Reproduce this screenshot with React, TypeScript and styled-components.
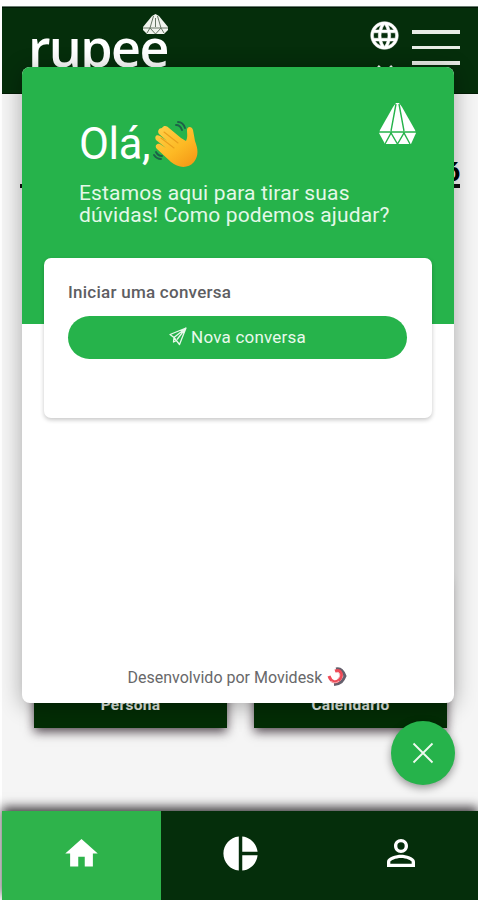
import { createGlobalStyle, styled } from 'styled-components';
import { MdHome, MdLanguage, MdPersonOutline, MdPieChart } from 'react-icons/md';

const GlobalStyle = createGlobalStyle`
    * {
        box-sizing: border-box;
    }

    body {
        margin: 0;
        background: #fefefe;
        font-family: Roboto, "Liberation Sans", sans-serif;
    }
`;

const Page = styled.div`
    position: relative;
    display: flex;
    flex-direction: column;
    height: 900px;
    padding: 6px 0 0 2px;
    overflow: hidden;
`;

const Header = styled.header`
    display: flex;
    align-items: flex-start;
    flex-shrink: 0;
    height: 88px;
    padding: 0 18px 0 26px;
    background: #052e0b;
    border-top: 1px solid #687d70;
    border-bottom: 1px solid #021c04;
    box-shadow: inset 0 1px 0 #001603;
`;

const Brand = styled.div`
    position: relative;
    margin-right: auto;
    padding-top: 11px;
    color: #fff;
    font: 600 52px/58px 'Open Sans', sans-serif;
    letter-spacing: -1.6px;
`;

const BrandGem = styled.svg`
    position: absolute;
    top: 7px;
    left: 114px;
`;

const Language = styled.div`
    display: flex;
    flex-direction: column;
    align-items: center;
    gap: 13px;
    padding-top: 12px;
    margin-right: 11px;
    color: #fff;
`;

const GlobeIcon = styled(MdLanguage)`
    path:not([fill='none']) {
        stroke: #fff;
        stroke-width: 0.4px;
    }
`;

const Burger = styled.div`
    display: flex;
    flex-direction: column;
    gap: 12px;
    padding-top: 23px;
`;

const BurgerLine = styled.span`
    width: 48px;
    height: 3.5px;
    background: #e9ece7;
`;

const Main = styled.main`
    display: flex;
    flex-direction: column;
    flex: 1;
    padding: 58px 18px 0;
    background: #f5f5f5;
`;

const Headline = styled.h1`
    height: 36px;
    margin: 0;
    border-bottom: 4px solid #111;
    font-size: 25px;
    line-height: 41px;
    font-weight: 900;
    text-align: right;
`;

const Tiles = styled.div`
    display: grid;
    grid-template-columns: 193px 193px;
    gap: 27px;
    margin: auto 0 83px 14px;
`;

const Tile = styled.div`
    display: flex;
    justify-content: center;
    align-items: flex-end;
    height: 150px;
    padding-bottom: 14px;
    background: #032d05;
    box-shadow: 0 4px 10px rgba(30, 15, 25, 0.75);
    color: #e5ece5;
    font-size: 15.5px;
    line-height: 18px;
    font-weight: 700;
    letter-spacing: 0.3px;
`;

const BottomNav = styled.nav`
    display: grid;
    grid-template-columns: 158.5px 160px 161px;
    flex-shrink: 0;
    height: 89px;
    background: #052e0b;
    box-shadow: 0 -4px 10px rgba(20, 15, 20, 0.8);
`;

const NavItem = styled.div<{ $active?: boolean }>`
    display: flex;
    justify-content: center;
    align-items: center;
    padding-bottom: 5px;
    background: ${p => (p.$active ? '#2eb34b' : 'transparent')};
    color: #fff;
`;

const Widget = styled.section`
    position: absolute;
    top: 67px;
    left: 22px;
    display: flex;
    flex-direction: column;
    width: 432px;
    height: 636px;
    border-radius: 8px;
    background: #fff;
    box-shadow: 0 3px 22px rgba(0, 0, 0, 0.32);
    overflow: hidden;
`;

const WidgetHeader = styled.div`
    display: flex;
    justify-content: space-between;
    flex-shrink: 0;
    height: 257px;
    padding: 36px 38px 0 57px;
    background: #26b34b;
    color: #fff;

    > svg {
        flex-shrink: 0;
    }
`;

const Greeting = styled.div`
    width: 290px;
    white-space: nowrap;
`;

const Hello = styled.div`
    display: flex;
    align-items: center;
    gap: 3px;
    height: 68px;
    padding-top: 16px;
    font-size: 43.5px;
    line-height: 52px;
    letter-spacing: -0.4px;
`;

const Intro = styled.p`
    margin: 12px 0 0;
    color: #e4f8e8;
    font-size: 21px;
    line-height: 21.5px;
    letter-spacing: 0.15px;
`;

const StartCard = styled.div`
    display: flex;
    flex-direction: column;
    flex-shrink: 0;
    height: 160px;
    margin: -66px 22px 0;
    padding: 23px 25px 0 24px;
    border-radius: 7px;
    background: #fff;
    box-shadow: 0 2px 4px rgba(0, 0, 0, 0.22);
`;

const StartTitle = styled.div`
    color: #5e5e62;
    font-size: 17px;
    line-height: 22px;
    font-weight: 500;
    letter-spacing: 0.25px;
`;

const StartButton = styled.button`
    display: flex;
    justify-content: center;
    align-items: center;
    gap: 4px;
    height: 43px;
    margin-top: 13px;
    padding: 0 0 2px;
    border: 0;
    border-radius: 22px;
    background: #26b34b;
    color: #e9f9ec;
    font-family: inherit;
    font-size: 17px;
    letter-spacing: 0.2px;
`;

const WidgetFooter = styled.footer`
    display: flex;
    justify-content: center;
    align-items: center;
    gap: 5px;
    height: 52px;
    margin-top: auto;
    color: #68686a;
    font-size: 16px;
`;

const CloseButton = styled.button`
    position: absolute;
    top: 721px;
    left: 391px;
    display: flex;
    justify-content: center;
    align-items: center;
    width: 64px;
    height: 64px;
    padding: 0;
    border: 0;
    border-radius: 50%;
    background: #26b34b;
    box-shadow: 0 3px 8px rgba(0, 0, 0, 0.4);
`;

const LogoGem = () => (
    <BrandGem width="27" height="21" viewBox="0 0 27 21" fill="#f1f4ee">
        <path d="M13.5 0 L17 2 L26 13 L26 16 L22 20 L5 20 L1 16 L1 13 L10 2 Z" />
        <path
            d="M11.5 2 L8 14 M15.5 2 L19 14 M13.5 4 V13 M1 14 H26 M5 19 L8 14 L13.5 20 L19 14 L22 19"
            fill="none"
            stroke="#667664"
            strokeWidth="1"
        />
    </BrandGem>
);

const ChatGem = () => (
    <svg width="37" height="42" viewBox="0 0 37 42">
        <path d="M17 0 H20 L23 4 L36 27 L37 30 L32 41 H6 L0 30 L1 27 L14 4 Z" fill="#fff" />
        <path
            d="M17 1 L12 28 M20 1 L25 28 M0 29 H37 M6 41 L12 30 L18.5 41 L25 30 L31 41"
            fill="none"
            stroke="#26b34b"
            strokeWidth="1.4"
        />
    </svg>
);

const WavingHand = () => (
    <svg width="48" height="48" viewBox="0 0 48 48">
        <defs>
            <linearGradient id="skin" x1="0" y1="0" x2="0.8" y2="1">
                <stop offset="0" stopColor="#ffd04a" />
                <stop offset="0.6" stopColor="#fdb924" />
                <stop offset="1" stopColor="#f59a17" />
            </linearGradient>
        </defs>
        <path
            d="M9 7 C11 4 14 5 16 7 L28 17 L33 20 C35 16 34 13 34 9 C34 5 39 5 40 9 L42 20 C45 28 46 34 41 41 C35 48 25 47 18 41 L4 28 C1 25 4 22 7 23 L13 27 L3 19 C1 15 4 13 7 15 L14 20 L6 13 C4 10 6 7 9 7 Z"
            fill="url(#skin)"
        />
        <path
            d="M11 11 L25 22 M8 17 L21 27"
            fill="none"
            stroke="#ea9f1c"
            strokeWidth="1.1"
            strokeLinecap="round"
        />
        <path
            d="M23 4 C26 4 28 6 29 9 M25 1 C29 1 31 4 32 7 M3 31 C4 33 6 35 9 35 M1 34 C3 37 5 38 8 38"
            fill="none"
            stroke="#1d6148"
            strokeWidth="1.9"
            strokeLinecap="round"
        />
    </svg>
);

const PlaneIcon = () => (
    <svg
        width="18"
        height="19"
        viewBox="0 0 18 19"
        fill="none"
        stroke="#e9f9ec"
        strokeWidth="1.3"
        strokeLinejoin="round"
    >
        <path d="M17 1 L1 7.5 L5 10.5 L10.5 17.5 Z M17 1 L5 10.5 M17 1 L8 12.5 M5 10.5 L4.5 15 L7.5 13.5" />
    </svg>
);

const MovideskIcon = () => (
    <svg width="21" height="20" viewBox="0 0 21 20" fill="none">
        <path d="M9 2 C14 1 16 4 18 9 C16 14 14 17 7 17.5" stroke="#65606d" strokeWidth="3" />
        <path d="M8 4 C14 2 16 8 13 12 C9 17 4 15 2 9" stroke="#ee4b58" strokeWidth="3" />
        <path d="M9 5.5 C13 4.5 14 9 11 11.5 M4 14 C6 16 9 16.5 12 14" stroke="#f3b9bd" strokeWidth="1" />
    </svg>
);

const ChatWidget = () => (
    <>
        <Widget>
            <WidgetHeader>
                <Greeting>
                    <Hello>
                        Olá,
                        <WavingHand />
                    </Hello>
                    <Intro>
                        Estamos aqui para tirar suas
                        <br />
                        dúvidas! Como podemos ajudar?
                    </Intro>
                </Greeting>
                <ChatGem />
            </WidgetHeader>
            <StartCard>
                <StartTitle>Iniciar uma conversa</StartTitle>
                <StartButton>
                    <PlaneIcon />
                    Nova conversa
                </StartButton>
            </StartCard>
            <WidgetFooter>
                Desenvolvido por Movidesk
                <MovideskIcon />
            </WidgetFooter>
        </Widget>
        <CloseButton aria-label="Fechar">
            <svg width="22" height="22" viewBox="0 0 22 22" stroke="#eefaf0" strokeWidth="1.8">
                <path d="M1.5 1.5 L20.5 20.5 M20.5 1.5 L1.5 20.5" />
            </svg>
        </CloseButton>
    </>
);

const App = () => (
    <>
        <GlobalStyle />
        <Page>
            <Header>
                <Brand>
                    rupee
                    <LogoGem />
                </Brand>
                <Language>
                    <GlobeIcon size={33} />
                    <svg width="18" height="11" viewBox="0 0 18 11" fill="none" stroke="#fff" strokeWidth="2.5">
                        <path d="M2 1 L9 8 L16 1" />
                    </svg>
                </Language>
                <Burger>
                    <BurgerLine />
                    <BurgerLine />
                    <BurgerLine />
                </Burger>
            </Header>
            <Main>
                <Headline>ó</Headline>
                <Tiles>
                    <Tile>Persona</Tile>
                    <Tile>Calendário</Tile>
                </Tiles>
            </Main>
            <BottomNav>
                <NavItem $active>
                    <MdHome size={39} />
                </NavItem>
                <NavItem>
                    <MdPieChart size={41} />
                </NavItem>
                <NavItem>
                    <MdPersonOutline size={42} />
                </NavItem>
            </BottomNav>
        </Page>
        <ChatWidget />
    </>
);

export default App;
